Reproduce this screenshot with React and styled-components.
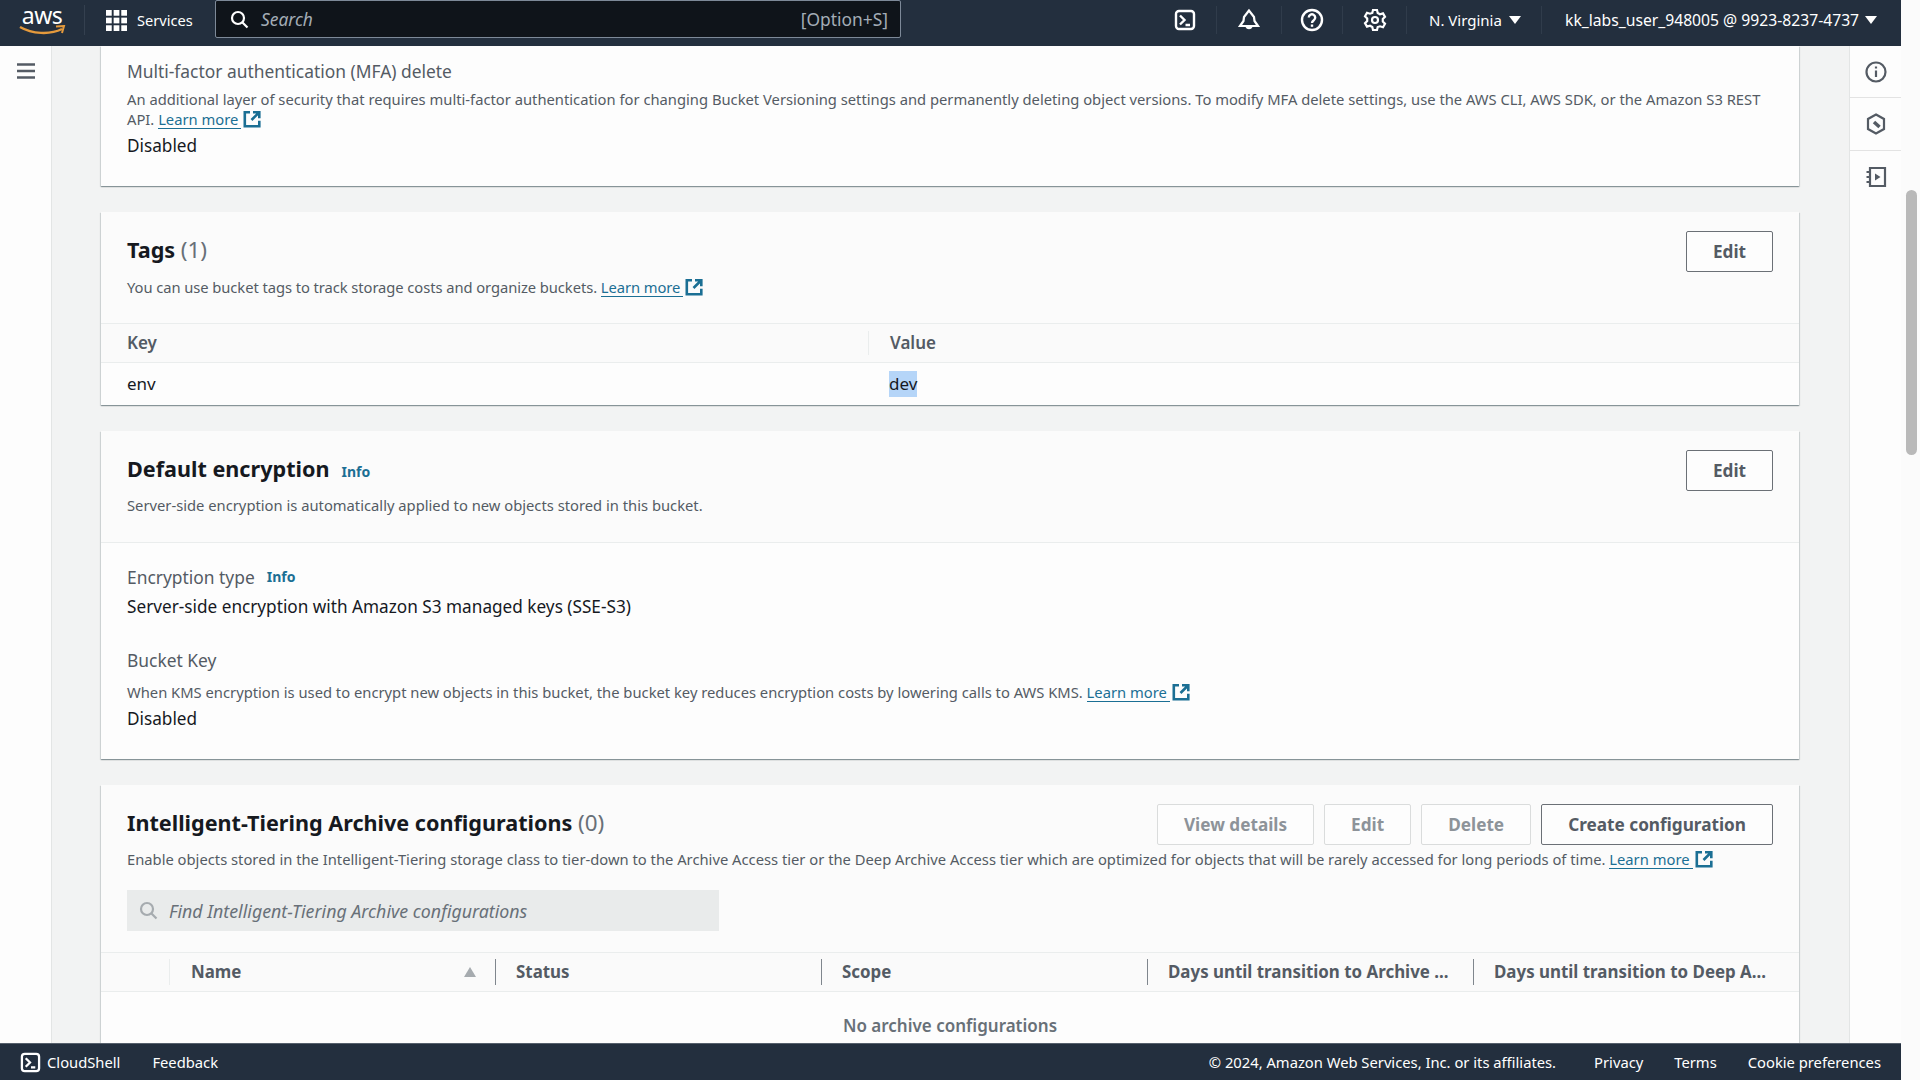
import React from 'react';
import styled, { createGlobalStyle } from 'styled-components';

const GlobalStyle = createGlobalStyle`
  html, body {
    margin: 0;
    height: 100%;
    overflow: hidden;
    background: #fdfdfd;
    font-family: "Noto Sans", "Open Sans", sans-serif;
    color: #16191f;
  }
`;

const LINK = '#1b6f94';

const Page = styled.div`
  display: flex;
  height: 1080px;
  overflow: hidden;
`;

const Screen = styled.div`
  width: 1901px;
  display: flex;
  flex-direction: column;
`;

const ScrollTrack = styled.div`
  flex: 1;
  padding: 190px 3px 0 5px;
  background: #fbfbfb;
`;

const ScrollThumb = styled.div`
  height: 265px;
  border-radius: 6px;
  background: #b9b9b9;
`;

const TopBar = styled.header`
  flex: none;
  height: 46px;
  padding-bottom: 6px;
  display: flex;
  align-items: center;
  background: #232f3e;
  color: #fff;
  font-size: 14.6px;
  box-sizing: border-box;
`;

const Logo = styled.div`
  flex: none;
  width: 85px;
  height: 30px;
  display: flex;
  flex-direction: column;
  align-items: center;
  line-height: 20px;
  font-size: 23px;
  letter-spacing: -0.5px;
  border-right: 1px solid #34404f;
  box-sizing: border-box;
`;

const ServicesButton = styled.div`
  flex: none;
  width: 130px;
  display: flex;
  align-items: center;
  gap: 10px;
  padding-left: 21px;
  box-sizing: border-box;
`;

const SearchBox = styled.div`
  flex: none;
  width: 686px;
  height: 38px;
  margin-bottom: 2px;
  padding: 0 12px 0 14px;
  display: flex;
  align-items: center;
  gap: 12px;
  background: #0f141a;
  border: 1px solid #7d8998;
  border-radius: 2px;
  font-size: 17.4px;
  color: #a3acb6;
  box-sizing: border-box;
`;

const SearchHint = styled.span`
  font-style: italic;
  flex: 1;
`;

const TopActions = styled.div`
  margin-left: auto;
  display: flex;
  align-items: center;
`;

const IconSlot = styled.div`
  width: ${(p) => p.$w}px;
  height: 28px;
  display: flex;
  align-items: center;
  justify-content: center;
  border-right: 1px solid #303c4b;
  box-sizing: border-box;
`;

const Menu = styled.div`
  display: flex;
  align-items: center;
  height: 28px;
  white-space: nowrap;
  box-sizing: border-box;
  font-size: ${(p) => (p.$last ? 15.7 : 15)}px;
  gap: ${(p) => (p.$last ? 6 : 7)}px;
  width: ${(p) => (p.$last ? 359 : 135)}px;
  padding-left: ${(p) => (p.$last ? 23 : 22)}px;
  border-right: ${(p) => (p.$last ? 'none' : '1px solid #303c4b')};
`;

const Caret = styled.span`
  flex: none;
  width: 0;
  height: 0;
  border-left: 6px solid transparent;
  border-right: 6px solid transparent;
  border-top: 8px solid #fff;
`;

const Middle = styled.div`
  flex: 1;
  min-height: 0;
  display: flex;
`;

const Rail = styled.aside`
  flex: none;
  width: 51px;
  background: #fdfdfd;
  display: flex;
  flex-direction: column;
  align-items: stretch;
  border-${(p) => p.$side}: 1px solid #e3e5e5;
`;

const RailButton = styled.div`
  height: ${(p) => p.$h}px;
  display: flex;
  align-items: center;
  justify-content: center;
  border-bottom: ${(p) => (p.$line ? '1px solid #e3e3e3' : 'none')};
`;

const Main = styled.main`
  flex: 1;
  min-width: 0;
  background: #f2f3f3;
  padding: 0 50px 0 49px;
  display: flex;
  flex-direction: column;
  gap: 26px;
  overflow: hidden;
`;

const Card = styled.section`
  flex: none;
  background: ${(p) => (p.$plain ? '#fdfdfd' : '#fbfbfb')};
  box-shadow: 0 1px 1px 0 rgba(0, 28, 36, 0.3), 1px 1px 1px 0 rgba(0, 28, 36, 0.1),
    -1px 1px 1px 0 rgba(0, 28, 36, 0.1);
`;

const MfaBlock = styled.div`
  height: 140px;
  padding: 12px 26px 0;
  box-sizing: border-box;
`;

const FieldLabel = styled.div`
  font-size: 17.4px;
  line-height: 26px;
  color: #545b64;
  display: flex;
  align-items: center;
  gap: 12px;
  margin-bottom: ${(p) => p.$mb || 0}px;
`;

const Description = styled.div`
  font-size: 14.76px;
  line-height: 20px;
  color: #545b64;
  letter-spacing: ${(p) => (p.$tight ? '-0.07px' : 'normal')};
  margin-top: ${(p) => p.$mt || 0}px;
  margin-bottom: ${(p) => p.$mb || 0}px;
`;

const Value = styled.div`
  font-size: 17.2px;
  line-height: 26px;
  color: #16191f;
`;

const CardHeader = styled.div`
  padding: 19px 26px 0;
  height: 111px;
  box-sizing: border-box;
`;

const WideHeader = styled.div`
  padding: 19px 26px 21px;
`;

const HeadRow = styled.div`
  display: flex;
  align-items: center;
  justify-content: space-between;
`;

const Heading = styled.h2`
  margin: 0 0 ${(p) => p.$lift || 0}px;
  font-size: 21.6px;
  line-height: 30px;
  font-weight: 700;
  color: #16191f;
  display: flex;
  align-items: baseline;
  gap: 8px;
`;

const Count = styled.span`
  font-size: 22.4px;
  font-weight: 400;
  color: #687078;
`;

const InfoLink = styled.a`
  font-size: 14px;
  font-weight: 700;
  color: ${LINK};
  margin-left: ${(p) => p.$gap || 0}px;
`;

const Actions = styled.div`
  display: flex;
  gap: 10px;
`;

const Button = styled.button`
  height: 41px;
  padding: 0 26px;
  background: #fdfdfd;
  font: 700 17.2px "Noto Sans", sans-serif;
  border: ${(p) => (p.disabled ? '1px solid #dadcdc' : '1.5px solid #6b7076')};
  color: ${(p) => (p.disabled ? '#8d9399' : '#545b64')};
  border-radius: 2px;
`;

const LinkText = styled.a`
  display: inline-block;
  line-height: 17px;
  color: ${LINK};
  border-bottom: 1px solid ${LINK};
  padding-right: 3px;
`;

const ExternalIcon = styled.svg`
  width: 18px;
  height: 18px;
  margin-left: 2px;
  vertical-align: -3px;
`;

const KvHead = styled.div`
  display: grid;
  grid-template-columns: 767px 1fr;
  height: 40px;
  align-items: center;
  background: #fafafa;
  border-top: 1px solid #eaeded;
  border-bottom: 1px solid #eaeded;
  box-sizing: border-box;
  font-size: 17px;
  font-weight: 600;
  color: #545b64;
`;

const KvRow = styled.div`
  display: grid;
  grid-template-columns: 767px 1fr;
  height: 42px;
  align-items: center;
  background: #fdfdfd;
  font-size: 17px;
`;

const KvCell = styled.div`
  padding-left: ${(p) => (p.$first ? 26 : 21)}px;
  height: 24px;
  line-height: 24px;
  border-left: ${(p) => (p.$line ? '1px solid #eaeded' : 'none')};
`;

const Selected = styled.span`
  background: #b5d5f8;
  display: inline-block;
  height: 26px;
  line-height: 25px;
  margin-top: -1px;
`;

const Section = styled.div`
  border-top: 1px solid #eaeded;
  background: #fdfdfd;
  padding: 21px 26px 27px;
`;

const Field = styled.div`
  margin-top: ${(p) => p.$mt || 0}px;
`;

const FilterInput = styled.div`
  width: 592px;
  height: 41px;
  margin-top: 21px;
  padding-left: 12px;
  display: flex;
  align-items: center;
  gap: 11px;
  background: #e9ebeb;
  font-size: 17.8px;
  font-style: italic;
  color: #687078;
  box-sizing: border-box;
`;

const GridHead = styled.div`
  display: grid;
  grid-template-columns: 68px repeat(5, 1fr);
  height: 40px;
  align-items: center;
  background: #fafafa;
  border-top: 1px solid #eaeded;
  border-bottom: 1px solid #eaeded;
  box-sizing: border-box;
  font-size: 16.9px;
  font-weight: 700;
  color: #545b64;
`;

const GridCell = styled.div`
  position: relative;
  height: 26px;
  line-height: 26px;
  padding-left: ${(p) => (p.$first ? 21 : 20)}px;
  border-left: 1px solid ${(p) => (p.$faint ? '#eaeded' : '#7f868d')};
  white-space: nowrap;
`;

const SortMark = styled.span`
  position: absolute;
  right: 19px;
  top: 8px;
  border-left: 6px solid transparent;
  border-right: 6px solid transparent;
  border-bottom: 10px solid #a6abaf;
`;

const EmptyRow = styled.div`
  background: #fdfdfd;
  padding-top: 22px;
  height: 120px;
  text-align: center;
  font-size: 17px;
  font-weight: 600;
  color: #687078;
`;

const Footer = styled.footer`
  flex: none;
  height: 37px;
  display: flex;
  align-items: center;
  background: #232f3e;
  color: #fff;
  font-size: 14.76px;
  border-top: 1px solid #56606c;
  box-sizing: border-box;
  padding: 0 20px;
`;

const FootLeft = styled.div`
  display: flex;
  align-items: center;
  gap: 6px;
  margin-right: 32px;
`;

const FootRight = styled.div`
  margin-left: auto;
  display: flex;
  gap: 31px;
`;

const Copyright = styled.span`
  margin-right: 7px;
`;

const TerminalIcon = ({ size = 22 }) => (
  <svg width={size} height={size} viewBox="0 0 22 22" fill="none" stroke="#fff" strokeWidth="2.4">
    <rect x="2" y="2" width="18" height="18" rx="3" />
    <path d="M6 6.500l4.500 4.500L6 15.500M11.500 16H16" />
  </svg>
);

const External = () => (
  <ExternalIcon viewBox="0 0 18 18" fill="none" stroke={LINK} strokeWidth="2.6">
    <path d="M7 2.300H1.800v14h14.500v-5.500" />
    <path d="M10 2.300h6.300v6M16 2.500L8.500 10" />
  </ExternalIcon>
);

const Learn = () => (
  <>
    <LinkText>Learn more</LinkText>
    <External />
  </>
);

const SearchGlass = ({ color, size = 19 }) => (
  <svg width={size} height={size} viewBox="0 0 19 19" fill="none" stroke={color} strokeWidth="2.2">
    <circle cx="8" cy="8" r="6" />
    <path d="M12.500 12.500L17.500 17.500" />
  </svg>
);

export default function App() {
  return (
    <Page>
      <GlobalStyle />
      <Screen>
        <TopBar>
          <Logo>
            aws
            <svg width="48" height="10" viewBox="0 0 48 10" fill="none">
              <path d="M2 2c12 7 30 8 42 2" stroke="#e59a3c" strokeWidth="2.4" />
              <path d="M38 1.500l8-.5-2 7" stroke="#e59a3c" strokeWidth="2" />
            </svg>
          </Logo>
          <ServicesButton>
            <svg width="21" height="21" viewBox="0 0 22 22" fill="#fff">
              {[0, 8, 16].map((y) =>
                [0, 8, 16].map((x) => <rect key={`${x}-${y}`} x={x} y={y} width="6" height="6" />)
              )}
            </svg>
            Services
          </ServicesButton>
          <SearchBox>
            <SearchGlass color="#fff" />
            <SearchHint>Search</SearchHint>
            [Option+S]
          </SearchBox>
          <TopActions>
            <IconSlot $w={64}>
              <TerminalIcon />
            </IconSlot>
            <IconSlot $w={65}>
              <svg width="24" height="24" viewBox="0 0 24 24" fill="none" stroke="#fff" strokeWidth="2.2">
                <path d="M12 2.500L7 9l-.5 4L3 18h18l-3.500-5-.5-4z" />
                <path d="M9.500 18.500a2.700 2.700 0 0 0 5 0" />
              </svg>
            </IconSlot>
            <IconSlot $w={61}>
              <svg width="24" height="24" viewBox="0 0 24 24" fill="none" stroke="#fff" strokeWidth="2.4">
                <circle cx="12" cy="12" r="10" />
                <path d="M8.800 9.500a3.200 3.200 0 1 1 5 2.700c-1.200.8-1.800 1.300-1.800 2.800" />
                <path d="M12 16.500v2.300" />
              </svg>
            </IconSlot>
            <IconSlot $w={64}>
              <svg width="24" height="24" viewBox="0 0 24 24" fill="none" stroke="#fff" strokeWidth="2.2">
                <circle cx="12" cy="12" r="3" />
                <path d="M10 2h4l.7 3 2.300 1.300 3-.9 2 3.500-2.200 2.100v2.600l2.200 2.100-2 3.500-3-.9L14.700 19l-.7 3h-4l-.7-3L7 17.700l-3 .9-2-3.500 2.200-2.100v-2.600L2 8.300l2-3.500 3 .9L9.300 5z" />
              </svg>
            </IconSlot>
            <Menu>
              N. Virginia <Caret />
            </Menu>
            <Menu $last>
              kk_labs_user_948005 @ 9923-8237-4737 <Caret />
            </Menu>
          </TopActions>
        </TopBar>

        <Middle>
          <Rail $side="right">
            <RailButton $h={50}>
              <svg width="20" height="18" viewBox="0 0 20 18" fill="none" stroke="#545b64" strokeWidth="2.400">
                <path d="M1 2.500h18M1 9h18M1 15.500h18" />
              </svg>
            </RailButton>
          </Rail>

          <Main>
            <Card $plain>
              <MfaBlock>
                <FieldLabel>Multi-factor authentication (MFA) delete</FieldLabel>
                <Description $mt={5} $mb={4}>
                  An additional layer of security that requires multi-factor authentication for changing Bucket
                  Versioning settings and permanently deleting object versions. To modify MFA delete settings, use the
                  AWS CLI, AWS SDK, or the Amazon S3 REST API. <Learn />
                </Description>
                <Value>Disabled</Value>
              </MfaBlock>
            </Card>

            <Card>
              <CardHeader>
                <HeadRow>
                  <Heading $lift={4}>
                    <span>
                      Tags <Count>(1)</Count>
                    </span>
                  </Heading>
                  <Button>Edit</Button>
                </HeadRow>
                <Description $mt={5} $tight>
                  You can use bucket tags to track storage costs and organize buckets. <Learn />
                </Description>
              </CardHeader>
              <KvHead>
                <KvCell $first>Key</KvCell>
                <KvCell $line>Value</KvCell>
              </KvHead>
              <KvRow>
                <KvCell $first>env</KvCell>
                <KvCell>
                  <Selected>dev</Selected>
                </KvCell>
              </KvRow>
            </Card>

            <Card>
              <CardHeader>
                <HeadRow>
                  <Heading>
                    Default encryption <InfoLink $gap={4}>Info</InfoLink>
                  </Heading>
                  <Button>Edit</Button>
                </HeadRow>
                <Description $mt={4}>
                  Server-side encryption is automatically applied to new objects stored in this bucket.
                </Description>
              </CardHeader>
              <Section>
                <Field>
                  <FieldLabel $mb={4}>
                    Encryption type <InfoLink>Info</InfoLink>
                  </FieldLabel>
                  <Value>Server-side encryption with Amazon S3 managed keys (SSE-S3)</Value>
                </Field>
                <Field $mt={27}>
                  <FieldLabel>Bucket Key</FieldLabel>
                  <Description $mt={9} $mb={4}>
                    When KMS encryption is used to encrypt new objects in this bucket, the bucket key reduces encryption
                    costs by lowering calls to AWS KMS. <Learn />
                  </Description>
                  <Value>Disabled</Value>
                </Field>
              </Section>
            </Card>

            <Card>
              <WideHeader>
                <HeadRow>
                  <Heading $lift={4}>
                    <span>
                      Intelligent-Tiering Archive configurations <Count>(0)</Count>
                    </span>
                  </Heading>
                  <Actions>
                    <Button disabled>View details</Button>
                    <Button disabled>Edit</Button>
                    <Button disabled>Delete</Button>
                    <Button>Create configuration</Button>
                  </Actions>
                </HeadRow>
                <Description $mt={4}>
                  Enable objects stored in the Intelligent-Tiering storage class to tier-down to the Archive Access tier
                  or the Deep Archive Access tier which are optimized for objects that will be rarely accessed for long
                  periods of time. <Learn />
                </Description>
                <FilterInput>
                  <SearchGlass color="#a6abaf" />
                  Find Intelligent-Tiering Archive configurations
                </FilterInput>
              </WideHeader>
              <GridHead>
                <span />
                <GridCell $faint $first>
                  Name
                  <SortMark />
                </GridCell>
                <GridCell>Status</GridCell>
                <GridCell>Scope</GridCell>
                <GridCell>Days until transition to Archive ...</GridCell>
                <GridCell>Days until transition to Deep A...</GridCell>
              </GridHead>
              <EmptyRow>No archive configurations</EmptyRow>
            </Card>
          </Main>

          <Rail $side="left">
            <RailButton $h={51} $line>
              <svg width="22" height="22" viewBox="0 0 22 22" fill="none" stroke="#545b64" strokeWidth="2.200">
                <circle cx="11" cy="11" r="9.500" />
                <path d="M11 9.500V16M11 5.500v2" />
              </svg>
            </RailButton>
            <RailButton $h={52} $line>
              <svg width="20" height="22" viewBox="0 0 20 22" fill="none" stroke="#545b64" strokeWidth="2.200">
                <path d="M10 1.500l8 4.500v10l-8 4.500-8-4.500V6z" />
                <path d="M8 9l5.500 5" strokeWidth="3.500" />
              </svg>
            </RailButton>
            <RailButton $h={52}>
              <svg width="22" height="22" viewBox="0 0 22 22" fill="none" stroke="#545b64" strokeWidth="2.200">
                <path d="M5 2h15v18H5z" />
                <path d="M1.500 6H6M1.500 11H6M1.500 16H6" />
                <path d="M10 7.500l5.500 3.500-5.500 3.500z" fill="#545b64" stroke="none" />
              </svg>
            </RailButton>
          </Rail>
        </Middle>

        <Footer>
          <FootLeft>
            <TerminalIcon size={21} />
            CloudShell
          </FootLeft>
          Feedback
          <FootRight>
            <Copyright>© 2024, Amazon Web Services, Inc. or its affiliates.</Copyright>
            <span>Privacy</span>
            <span>Terms</span>
            <span>Cookie preferences</span>
          </FootRight>
        </Footer>
      </Screen>
      <ScrollTrack>
        <ScrollThumb />
      </ScrollTrack>
    </Page>
  );
}
